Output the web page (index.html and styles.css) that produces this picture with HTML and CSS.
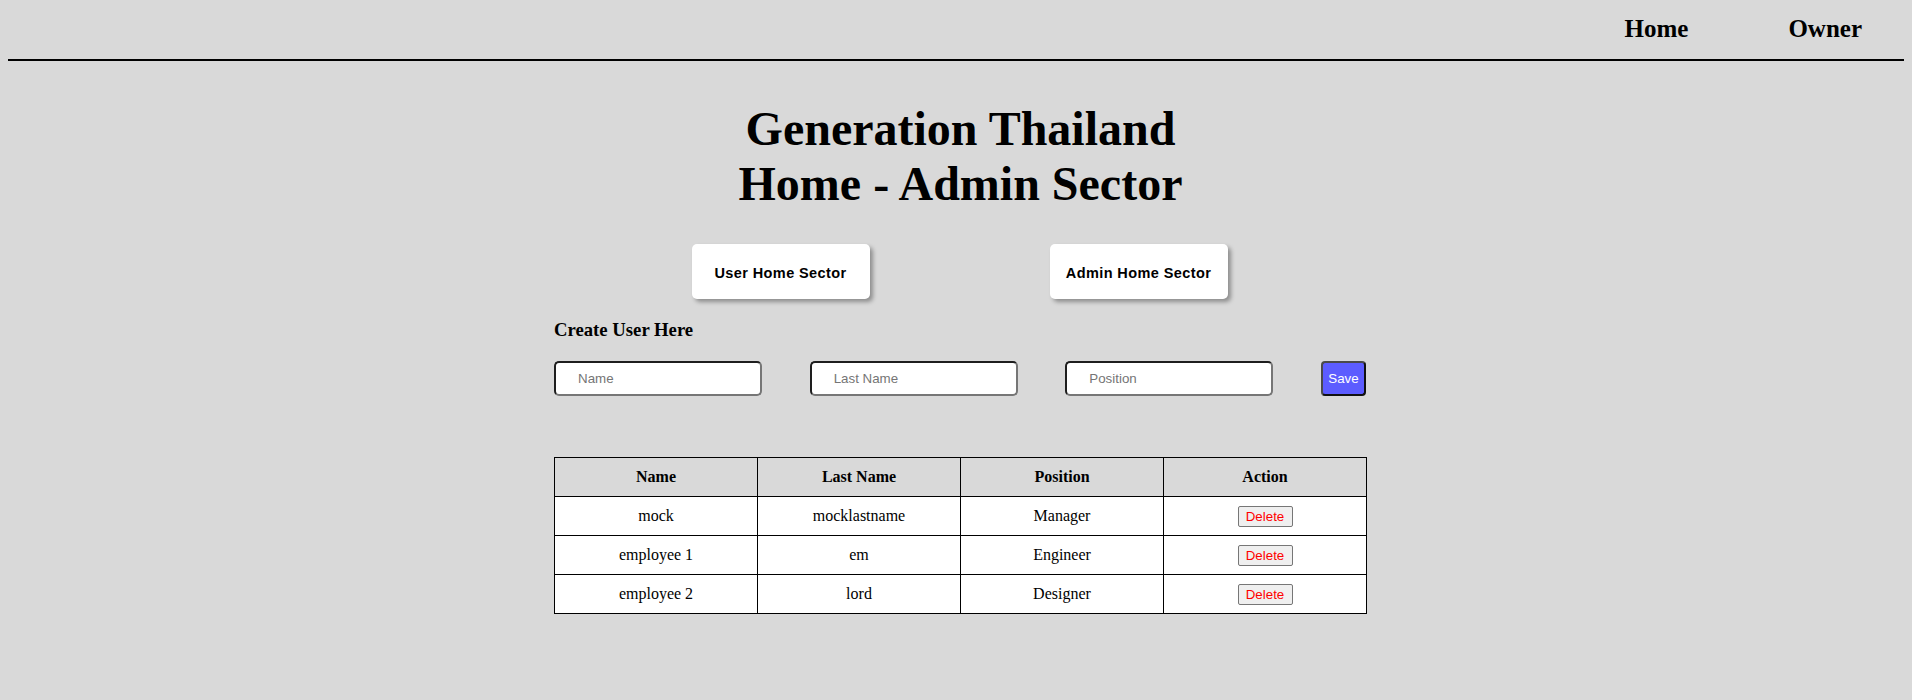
FILE: index.html
```html
<!DOCTYPE html>
<html lang="en">
<head>
<meta charset="utf-8">
<title>Generation Thailand - Admin</title>
<link rel="stylesheet" href="styles.css">
</head>
<body>
<header class="topbar">
  <nav class="nav">
    <a class="nav-link" href="#">Home</a>
    <a class="nav-link" href="#">Owner</a>
  </nav>
</header>
<main class="main">
  <h1 class="title">Generation Thailand<br>Home - Admin Sector</h1>
  <div class="sector-row">
    <button class="sector-btn">User Home Sector</button>
    <button class="sector-btn">Admin Home Sector</button>
  </div>
  <h3 class="form-title">Create User Here</h3>
  <form class="create-form">
    <input class="field" type="text" placeholder="Name">
    <input class="field" type="text" placeholder="Last Name">
    <input class="field" type="text" placeholder="Position">
    <button class="save-btn" type="button">Save</button>
  </form>
  <table class="users">
    <thead>
      <tr><th>Name</th><th>Last Name</th><th>Position</th><th>Action</th></tr>
    </thead>
    <tbody>
      <tr><td>mock</td><td>mocklastname</td><td>Manager</td><td><button class="del-btn">Delete</button></td></tr>
      <tr><td>employee 1</td><td>em</td><td>Engineer</td><td><button class="del-btn">Delete</button></td></tr>
      <tr><td>employee 2</td><td>lord</td><td>Designer</td><td><button class="del-btn">Delete</button></td></tr>
    </tbody>
  </table>
</main>
</body>
</html>
```
FILE: styles.css
```css
html, body {
  background: #d9d9d9;
}
body {
  margin: 8px;
  font-family: "Liberation Serif", "Times New Roman", serif;
  color: #000;
}
.topbar {
  padding: 7px 42px 16px 0;
  border-bottom: 2px solid #000;
}
.nav {
  display: flex;
  justify-content: flex-end;
  gap: 100px;
}
.nav-link {
  font-size: 25px;
  line-height: 28px;
  font-weight: bold;
  color: #000;
  text-decoration: none;
}
.main {
  width: 813px;
  margin-left: calc(50% - 402px);
}
.title {
  margin: 40px 0 0;
  font-size: 48px;
  line-height: 55px;
  font-weight: bold;
  text-align: center;
}
.sector-row {
  display: flex;
  justify-content: center;
  gap: 180px;
  margin-top: 33px;
  padding-right: 2px;
}
.sector-btn {
  width: 178px;
  height: 55px;
  background: #fff;
  border: none;
  border-radius: 5px;
  box-shadow: 3px 3px 4px rgba(0, 0, 0, 0.35);
  font-family: "Liberation Sans", Arial, sans-serif;
  font-size: 14.5px;
  font-weight: bold;
  letter-spacing: 0.4px;
  color: #000;
  padding: 3px 0 0;
}
.form-title {
  margin: 20px 0 0;
  font-size: 18.72px;
  line-height: 22px;
  font-weight: bold;
}
.create-form {
  display: flex;
  justify-content: space-between;
  align-items: flex-start;
  width: 812px;
  margin-top: 20px;
}
.field {
  box-sizing: border-box;
  width: 208px;
  height: 35px;
  padding: 0 22px;
  border: 2px solid;
  border-color: #1e1e1e #767676 #767676 #1e1e1e;
  border-radius: 5px;
  background: #fff;
  font-family: "Liberation Sans", Arial, sans-serif;
  font-size: 13.333px;
  color: #000;
  outline: none;
}
.field::placeholder {
  color: #757575;
}
.save-btn {
  box-sizing: border-box;
  width: 45px;
  height: 35px;
  padding: 0;
  background: #5c5cff;
  color: #fff;
  border: 2px solid;
  border-color: #4a4a4a #111 #111 #4a4a4a;
  border-radius: 4px;
  font-family: "Liberation Sans", Arial, sans-serif;
  font-size: 13.333px;
}
.users {
  margin-top: 61px;
  width: 813px;
  table-layout: fixed;
  border-collapse: collapse;
  border: 1px solid #000;
}
.users th, .users td {
  border: 1px solid #000;
  height: 38px;
  padding: 0;
  text-align: center;
  vertical-align: middle;
  font-size: 16px;
}
.users th {
  font-weight: bold;
}
.users td {
  background: #fff;
}
.del-btn {
  font-family: "Liberation Sans", Arial, sans-serif;
  font-size: 13.333px;
  color: #ff0000;
  background: #efefef;
  border: 1px solid #767676;
  border-radius: 2px;
  padding: 1px 6px;
  height: 21px;
  width: 55px;
}
```
